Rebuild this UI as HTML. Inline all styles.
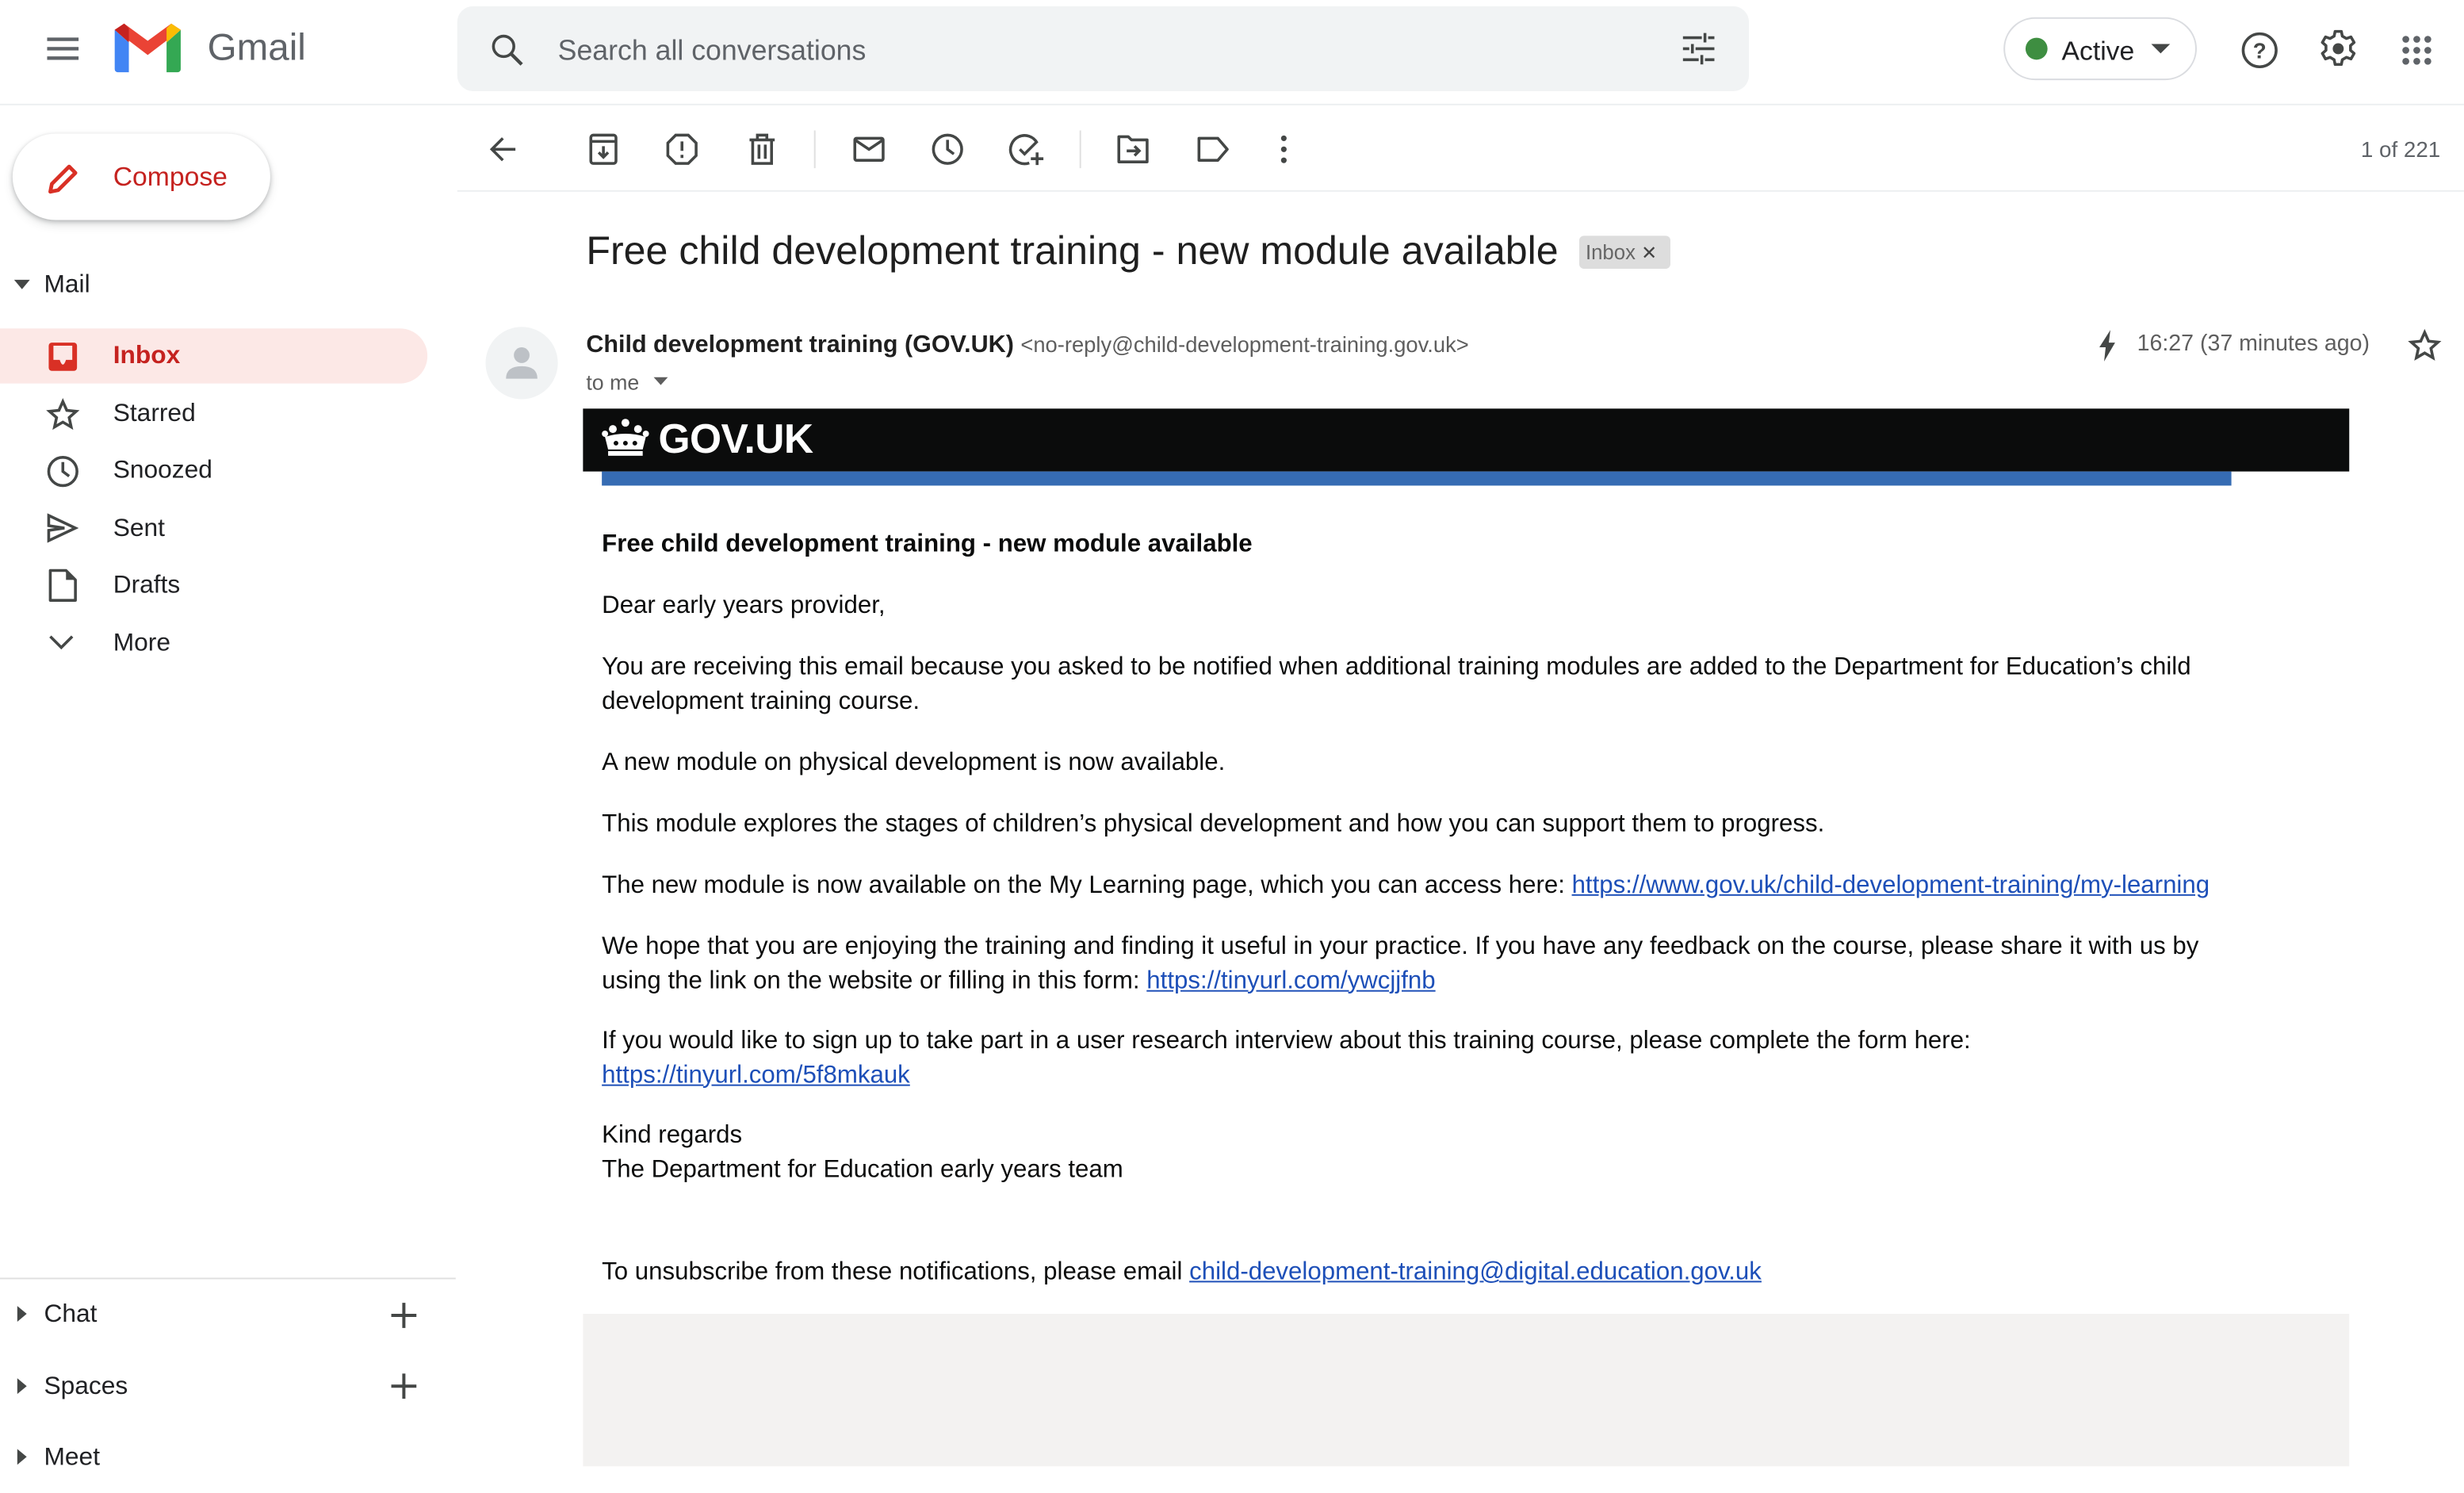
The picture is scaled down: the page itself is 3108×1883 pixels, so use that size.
<!DOCTYPE html>
<html><head><meta charset="utf-8"><style>
html,body{margin:0;padding:0;width:3108px;height:1882px;overflow:hidden;background:#fff}
#w{position:absolute;left:0;top:0;width:1568px;height:950px;transform:scale(1.9821);transform-origin:0 0;font-family:"Liberation Sans",Arial,sans-serif;color:#202124}
.a{position:absolute;white-space:nowrap}
svg{position:absolute;overflow:visible}
.ic{fill:none;stroke:#444746;stroke-width:1.8}
.nav{font-size:16px;color:#202124}
.b{font-size:15.75px;color:#0b0c0c;line-height:21.5px}
a{color:#1d4fb8;text-decoration:underline}
</style></head><body><div id="w">
<!-- top bar -->
<svg style="left:29px;top:23px" width="22" height="16"><path d="M1 2h20M1 8h20M1 14h20" stroke="#5f6368" stroke-width="2.2"/></svg>
<svg style="left:73px;top:15px" width="42" height="32" viewBox="0 0 42 32">
<path d="M0 4v25a2 2 0 0 0 2 2h7V12z" fill="#4285f4"/><path d="M33 31h7a2 2 0 0 0 2-2V4l-9 8z" fill="#34a853"/>
<path d="M0 4l21 16 21-16-6-4-15 11L6 0z" fill="#ea4335"/><path d="M0 4 6 0l3 3v9z" fill="#c5221f"/><path d="M42 4 36 0l-3 3v9z" fill="#fbbc04"/></svg>
<div class="a" style="left:132px;top:17px;font-size:24px;color:#5f6368">Gmail</div>
<div class="a" style="left:291px;top:4px;width:822px;height:54px;background:#f1f3f4;border-radius:10px"></div>
<svg style="left:312px;top:21px" width="22" height="22"><circle cx="8.5" cy="8.5" r="6.5" class="ic" stroke="#444746" stroke-width="2"/><path d="M13 13l7 7" stroke="#444746" stroke-width="2.2"/></svg>
<div class="a" style="left:355px;top:22px;font-size:18px;color:#5f6368">Search all conversations</div>
<svg style="left:1070px;top:21px" width="22" height="20"><path d="M1 3h12M17 3h4M1 10h4M9 10h12M1 17h10M15 17h6M15 0v6M7 7v6M13 14v6" stroke="#444746" stroke-width="1.8"/></svg>
<div class="a" style="left:1275px;top:11px;width:121px;height:38px;border:1px solid #dadce0;border-radius:20px"></div>
<div class="a" style="left:1289px;top:24px;width:14px;height:14px;border-radius:50%;background:#3e8e41"></div>
<div class="a" style="left:1312px;top:23px;font-size:17px;color:#202124">Active</div>
<svg style="left:1369px;top:28px" width="12" height="7"><path d="M0 0h12L6 6z" fill="#444746"/></svg>
<svg style="left:1426px;top:20px" width="24" height="24"><circle cx="12" cy="12" r="10.5" class="ic" stroke-width="2"/><text x="12" y="17" text-anchor="middle" font-size="14" font-weight="bold" fill="#444746" font-family="Liberation Sans">?</text></svg>
<svg style="left:1476px;top:19px" width="24" height="24" viewBox="0 0 24 24"><path d="M10 1h4l.6 3 2.6 1.5 2.9-1 2 3.5-2.3 2v3l2.3 2-2 3.5-2.9-1-2.6 1.5-.6 3h-4l-.6-3-2.6-1.5-2.9 1-2-3.5 2.3-2v-3l-2.3-2 2-3.5 2.9 1L9.4 4z" fill="none" stroke="#444746" stroke-width="1.8" stroke-linejoin="round"/><circle cx="12" cy="12" r="3.5" fill="#444746"/></svg>
<svg style="left:1528px;top:22px" width="20" height="20"><g fill="#5f6368"><circle cx="3" cy="3" r="2.2"/><circle cx="10" cy="3" r="2.2"/><circle cx="17" cy="3" r="2.2"/><circle cx="3" cy="10" r="2.2"/><circle cx="10" cy="10" r="2.2"/><circle cx="17" cy="10" r="2.2"/><circle cx="3" cy="17" r="2.2"/><circle cx="10" cy="17" r="2.2"/><circle cx="17" cy="17" r="2.2"/></g></svg>
<div class="a" style="left:0;top:66px;width:1568px;height:1px;background:#eceff1"></div>
<!-- sidebar -->
<div class="a" style="left:8px;top:85px;width:164px;height:55px;border-radius:28px;background:#fff;box-shadow:0 1px 3px rgba(60,64,67,.3),0 3px 6px rgba(60,64,67,.15)"></div>
<svg style="left:29px;top:103px" width="22" height="22"><path d="M3 19l1-5L15 3l4 4L8 18z" fill="none" stroke="#d93025" stroke-width="2.4" stroke-linejoin="round"/></svg>
<div class="a" style="left:72px;top:103px;font-size:17px;color:#c5221f">Compose</div>
<svg style="left:9px;top:178px" width="10" height="7"><path d="M0 0h10L5 6z" fill="#444746"/></svg>
<div class="a nav" style="left:28px;top:173px">Mail</div>
<div class="a" style="left:0;top:209px;width:272px;height:35px;background:#fce8e6;border-radius:0 18px 18px 0"></div>
<svg style="left:30px;top:217px" width="20" height="20"><rect x="1" y="1" width="18" height="18" rx="2" fill="#d93025"/><path d="M4 3h12v9h-4q-1 3-2 3t-2-3H4z" fill="#fce8e6"/></svg>
<div class="a" style="left:72px;top:218px;font-size:16px;font-weight:bold;color:#c5221f">Inbox</div>
<svg style="left:30px;top:254px" width="20" height="20"><path d="M10 1.5l2.5 5.6 6 .6-4.5 4 1.3 6L10 14.6 4.7 17.7l1.3-6-4.5-4 6-.6z" class="ic"/></svg>
<div class="a nav" style="left:72px;top:255px">Starred</div>
<svg style="left:29px;top:289px" width="22" height="22"><circle cx="11" cy="11" r="9" class="ic" stroke-width="2"/><path d="M11 5v6l4 3" class="ic" stroke-width="2"/></svg>
<div class="a nav" style="left:72px;top:291px">Snoozed</div>
<svg style="left:30px;top:327px" width="20" height="20"><path d="M1 1l17 8-17 8v-6.5L11 9 1 7.5z" class="ic"/></svg>
<div class="a nav" style="left:72px;top:328px">Sent</div>
<svg style="left:31px;top:362px" width="18" height="22"><path d="M1 1h10l6 6v13H1z" class="ic" stroke-linejoin="round"/><path d="M11 1v6h6" fill="#444746"/></svg>
<div class="a nav" style="left:72px;top:364px">Drafts</div>
<svg style="left:31px;top:404px" width="16" height="10"><path d="M1 1l7 7 7-7" class="ic" stroke-width="2"/></svg>
<div class="a nav" style="left:72px;top:401px">More</div>
<div class="a" style="left:0;top:813px;width:290px;height:1px;background:#e0e0e0"></div>
<svg style="left:11px;top:831px" width="7" height="10"><path d="M0 0l6 5-6 5z" fill="#444746"/></svg>
<div class="a nav" style="left:28px;top:828px">Chat</div>
<svg style="left:248px;top:828px" width="18" height="18"><path d="M9 1v16M1 9h16" stroke="#444746" stroke-width="2"/></svg>
<svg style="left:11px;top:877px" width="7" height="10"><path d="M0 0l6 5-6 5z" fill="#444746"/></svg>
<div class="a nav" style="left:28px;top:874px">Spaces</div>
<svg style="left:248px;top:873px" width="18" height="18"><path d="M9 1v16M1 9h16" stroke="#444746" stroke-width="2"/></svg>
<svg style="left:11px;top:922px" width="7" height="10"><path d="M0 0l6 5-6 5z" fill="#444746"/></svg>
<div class="a nav" style="left:28px;top:919px">Meet</div>
<!-- toolbar -->
<svg style="left:311px;top:86px" width="18" height="18"><path d="M17 9H2M9 2L2 9l7 7" class="ic" stroke-width="2"/></svg>
<svg style="left:375px;top:85px" width="18" height="20"><rect x="1" y="1" width="16" height="18" rx="1.5" class="ic"/><path d="M1 5h16M9 8v7M6 12l3 3 3-3" class="ic"/></svg>
<svg style="left:424px;top:85px" width="20" height="20"><path d="M6 1h8l5 5v8l-5 5H6l-5-5V6z" class="ic"/><path d="M10 5v6M10 13.5v2" class="ic" stroke-width="2"/></svg>
<svg style="left:476px;top:85px" width="18" height="20"><path d="M1 4h16M6 4V1h6v3M3 4v15h12V4M7 7v9M11 7v9" class="ic"/></svg>
<div class="a" style="left:518px;top:83px;width:1px;height:24px;background:#e0e0e0"></div>
<svg style="left:543px;top:87px" width="20" height="16"><rect x="1" y="1" width="18" height="14" rx="1" class="ic"/><path d="M1 2l9 6 9-6" class="ic"/></svg>
<svg style="left:593px;top:85px" width="20" height="20"><circle cx="10" cy="10" r="9" class="ic"/><path d="M10 4v6l4 3" class="ic"/></svg>
<svg style="left:643px;top:85px" width="22" height="20"><path d="M17 6A9 9 0 1 0 12 18.7" class="ic"/><path d="M6 10l3 3 8-8M17 12v8M13 16h8" class="ic"/></svg>
<div class="a" style="left:687px;top:83px;width:1px;height:24px;background:#e0e0e0"></div>
<svg style="left:711px;top:86px" width="20" height="18"><path d="M1 1h6l2 2h10v14H1z" class="ic" stroke-linejoin="round"/><path d="M6 10h8M11 7l3 3-3 3" class="ic"/></svg>
<svg style="left:762px;top:87px" width="20" height="16"><path d="M1 1h12l6 7-6 7H1z" class="ic" stroke-linejoin="round"/></svg>
<svg style="left:815px;top:86px" width="4" height="18"><circle cx="2" cy="2" r="1.8" fill="#444746"/><circle cx="2" cy="9" r="1.8" fill="#444746"/><circle cx="2" cy="16" r="1.8" fill="#444746"/></svg>
<div class="a" style="left:1490px;top:87px;width:63px;text-align:right;font-size:14px;color:#5f6368">1 of 221</div>
<div class="a" style="left:291px;top:121px;width:1277px;height:1px;background:#eceff1"></div>
<!-- subject -->
<div class="a" style="left:373px;top:146px;font-size:25.3px;color:#1f1f1f">Free child development training - new module available</div>
<div class="a" style="left:1005px;top:150px;width:58px;height:21px;background:#ddd;border-radius:3px;font-size:13px;color:#666;line-height:21px;padding-left:4px;box-sizing:border-box">Inbox <span style="color:#444;font-size:12px">✕</span></div>
<!-- sender -->
<svg style="left:309px;top:208px" width="46" height="46"><circle cx="23" cy="23" r="23" fill="#f1f3f4"/><circle cx="23" cy="18" r="5" fill="#bdc1c6"/><path d="M13 33q0-8 10-8t10 8z" fill="#bdc1c6"/></svg>
<div class="a" style="left:373px;top:211px;font-size:15.4px;font-weight:bold;color:#1f1f1f">Child development training (GOV.UK) <span style="font-weight:normal;font-size:13.8px;color:#5e5e5e">&lt;no-reply@child-development-training.gov.uk&gt;</span></div>
<div class="a" style="left:373px;top:236px;font-size:13.5px;color:#5e5e5e">to me</div>
<svg style="left:416px;top:240px" width="9" height="6"><path d="M0 0h9L4.5 5z" fill="#5e5e5e"/></svg>
<svg style="left:1335px;top:210px" width="12" height="20"><path d="M8 0L1 11h4l-1 9 7-12H7z" fill="#444746"/></svg>
<div class="a" style="left:1360px;top:211px;font-size:14.4px;color:#5e5e5e">16:27 (37 minutes ago)</div>
<svg style="left:1533px;top:210px" width="20" height="20"><path d="M10 1.5l2.5 5.6 6 .6-4.5 4 1.3 6L10 14.6 4.7 17.7l1.3-6-4.5-4 6-.6z" class="ic"/></svg>
<!-- gov banner -->
<div class="a" style="left:371px;top:260px;width:1124px;height:40px;background:#0b0c0c"></div>
<svg style="left:382px;top:266px" width="32" height="26" viewBox="0 0 32 26"><g fill="#fff"><path d="M3 12q13-4 26 0l-2 8H5z"/><rect x="5" y="21" width="22" height="3"/><circle cx="16" cy="3" r="2.5"/><circle cx="8" cy="7" r="2.5"/><circle cx="24" cy="7" r="2.5"/><circle cx="3" cy="10" r="2"/><circle cx="29" cy="10" r="2"/></g><g fill="#0b0c0c"><circle cx="10" cy="16" r="1.5"/><circle cx="16" cy="16" r="1.5"/><circle cx="22" cy="16" r="1.5"/></g></svg>
<div class="a" style="left:419px;top:264px;font-size:26px;font-weight:bold;color:#fff;letter-spacing:-0.3px">GOV.UK</div>
<div class="a" style="left:383px;top:300px;width:1037px;height:9px;background:#366cb3"></div>
<!-- body -->
<div class="a b" style="left:383px;top:336px;font-weight:bold">Free child development training - new module available</div>
<div class="a b" style="left:383px;top:375px">Dear early years provider,</div>
<div class="a b" style="left:383px;top:414px">You are receiving this email because you asked to be notified when additional training modules are added to the Department for Education’s child<br>development training course.</div>
<div class="a b" style="left:383px;top:475px">A new module on physical development is now available.</div>
<div class="a b" style="left:383px;top:514px">This module explores the stages of children’s physical development and how you can support them to progress.</div>
<div class="a b" style="left:383px;top:553px">The new module is now available on the My Learning page, which you can access here: <a>https://www.gov.uk/child-development-training/my-learning</a></div>
<div class="a b" style="left:383px;top:592px">We hope that you are enjoying the training and finding it useful in your practice. If you have any feedback on the course, please share it with us by<br>using the link on the website or filling in this form: <a>https://tinyurl.com/ywcjjfnb</a></div>
<div class="a b" style="left:383px;top:652px">If you would like to sign up to take part in a user research interview about this training course, please complete the form here:<br><a>https://tinyurl.com/5f8mkauk</a></div>
<div class="a b" style="left:383px;top:712px">Kind regards<br>The Department for Education early years team</div>
<div class="a b" style="left:383px;top:799px">To unsubscribe from these notifications, please email <a>child-development-training@digital.education.gov.uk</a></div>
<div class="a" style="left:371px;top:836px;width:1124px;height:97px;background:#f3f2f1"></div>
</div></body></html>
